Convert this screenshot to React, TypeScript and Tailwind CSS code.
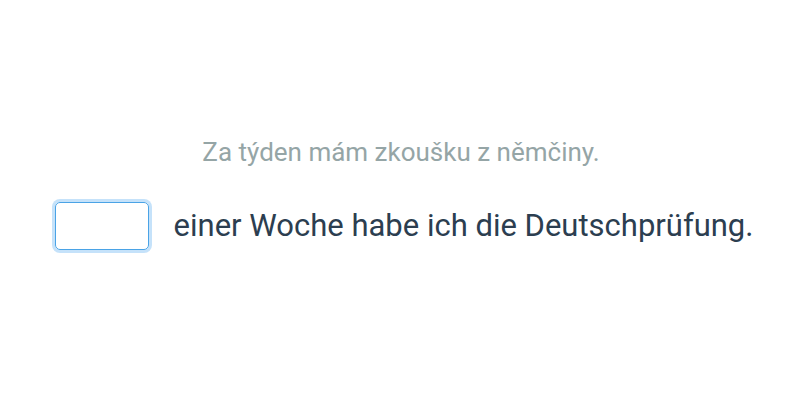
import React, { useState } from "react";

export default function App() {
  const [answer, setAnswer] = useState("");

  return (
    <div
      className="w-full h-[400px] bg-white flex flex-col items-center justify-center"
      style={{ fontFamily: "Roboto, 'Noto Sans', sans-serif" }}
    >
      {/* Prompt in Czech */}
      <p className="text-[26px] leading-none text-[#95a5a6] mt-[-12px] ml-[2px]">
        Za týden mám zkoušku z němčiny.
      </p>

      {/* Gap-fill sentence */}
      <div className="flex items-center mt-[37px] gap-[25px] ml-[8px]">
        <input
          autoFocus
          value={answer}
          onChange={(e) => setAnswer(e.target.value)}
          className="w-[94px] h-[48px] rounded-[5px] border border-[#4aa3e6] ring-[3px] ring-[#c5e2fa] outline-none px-2 text-[28px] text-[#2c3e50]"
        />
        <span className="text-[31px] leading-none text-[#2c3e50]">
          einer Woche habe ich die Deutschprüfung.
        </span>
      </div>
    </div>
  );
}
